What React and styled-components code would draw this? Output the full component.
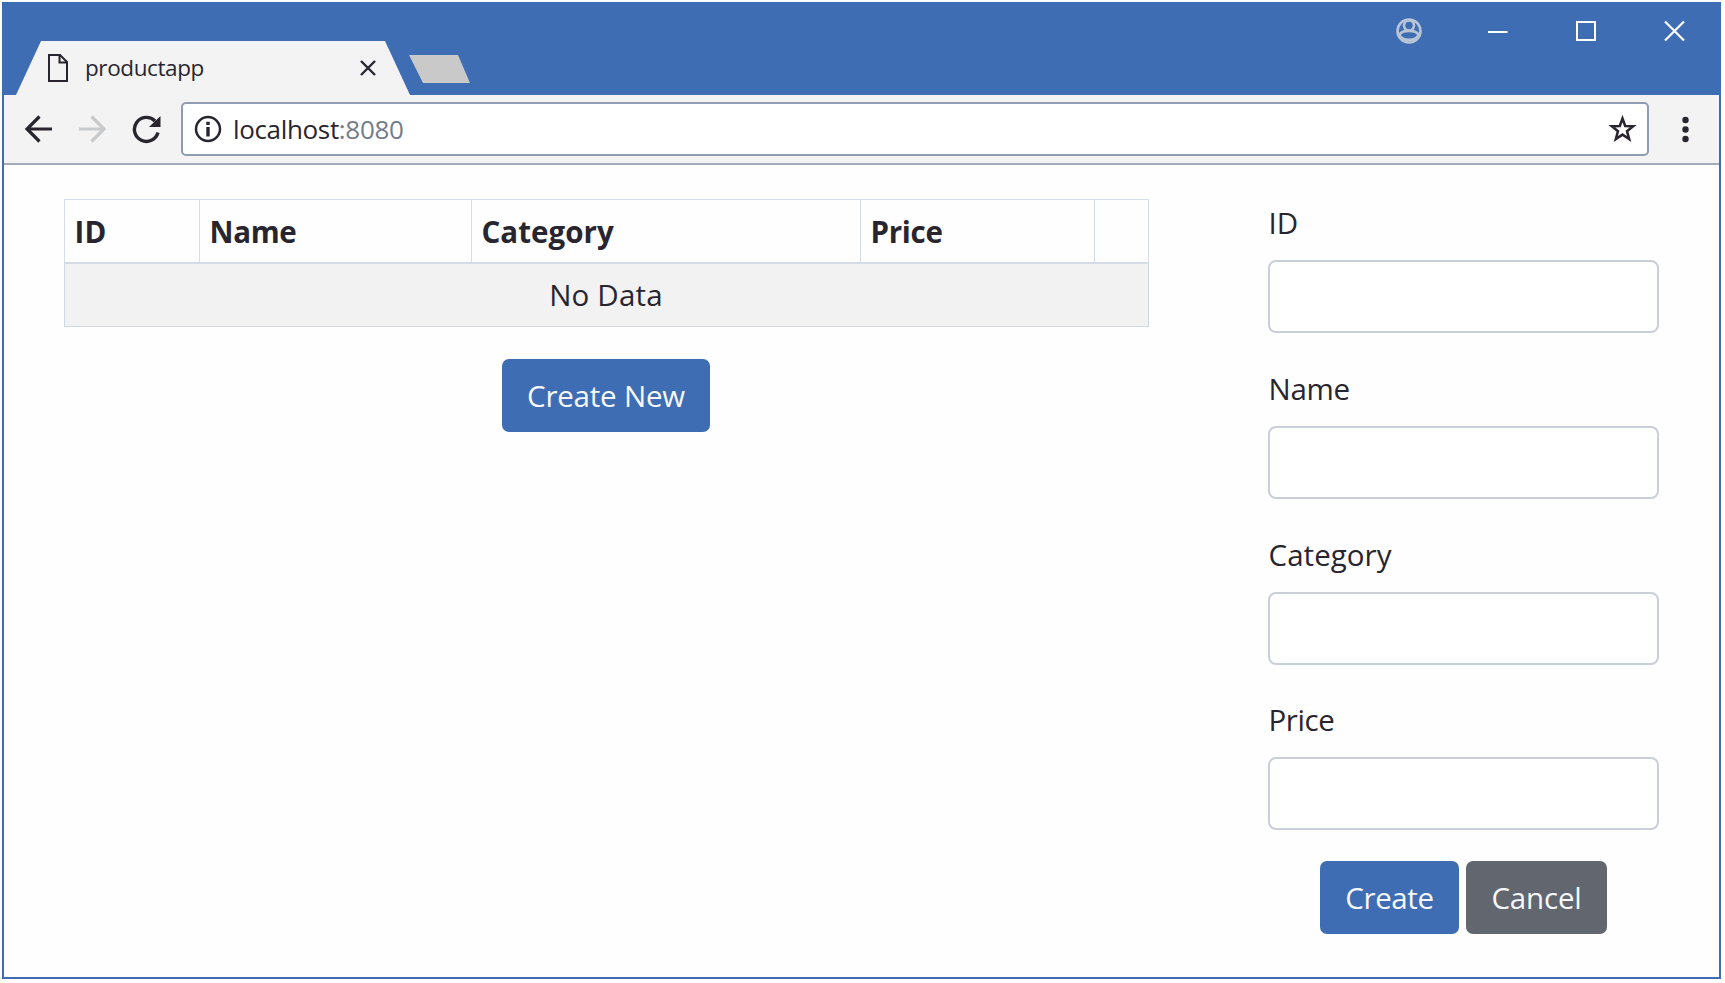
import React from "react";
import styled, { createGlobalStyle } from "styled-components";

const BLUE = "#3f6db3";
const INK = "#29252f";

const GlobalStyle = createGlobalStyle`
  * { box-sizing: border-box; }
  body {
    margin: 0;
    background: #fff;
    color: ${INK};
    font-family: "Open Sans", "Noto Sans", sans-serif;
    font-size: 29.5px;
    line-height: 40px;
  }
`;

const Page = styled.div`
  width: 1725px;
  height: 983px;
  padding: 2px 4px 4px 2px;
  overflow: hidden;
`;

const Window = styled.div`
  display: flex;
  flex-direction: column;
  height: 100%;
  border: 2px solid ${BLUE};
  background: #fefefe;
`;

const TitleBar = styled.header`
  display: flex;
  justify-content: space-between;
  height: 91px;
  flex: none;
  background: ${BLUE};
`;

const Tabs = styled.div`
  display: flex;
  align-items: flex-end;
  padding-left: 12px;
`;

const Tab = styled.div`
  display: flex;
  align-items: center;
  width: 394px;
  height: 54px;
  padding: 0 34px 0 32px;
  background: #f3f3f3;
  clip-path: polygon(0 100%, 25px 0, 369px 0, 100% 100%);
`;

const TabTitle = styled.span`
  flex: 1;
  margin-left: 17px;
  padding-bottom: 1px;
  font-size: 22.5px;
  line-height: 30px;
  letter-spacing: ${(p) => p.$spacing}px;
`;

const NewTab = styled.div`
  width: 61px;
  height: 28px;
  margin: 0 0 12px -1px;
  background: #c9c9c9;
  clip-path: polygon(0 0, 49px 0, 100% 100%, 14px 100%);
`;

const WindowControls = styled.div`
  display: flex;
  align-items: flex-start;
  gap: 60px;
  padding: 12px 31px 0 0;
`;

const Toolbar = styled.div`
  display: flex;
  align-items: center;
  height: 70px;
  flex: none;
  padding: 0 26px 0 19px;
  border-bottom: 2px solid #a3abb8;
  background: #f3f3f3;
`;

const NavIcons = styled.div`
  display: flex;
  gap: 24px;
  width: 158px;
`;

const AddressBar = styled.div`
  display: flex;
  align-items: center;
  width: 1469px;
  height: 54px;
  margin-right: 28px;
  padding: 0 10px 0 11px;
  border: 2px solid #909cb2;
  border-radius: 5px;
  background: #fff;
`;

const Url = styled.span`
  flex: 1;
  margin-left: 11px;
  font-size: 26px;
  line-height: 36px;
  letter-spacing: ${(p) => p.$spacing}px;
`;

const Port = styled.span`
  color: #747c89;
`;

const Content = styled.main`
  display: flex;
  padding: 34px 60px 0 60px;
`;

const ListPane = styled.section`
  display: flex;
  flex-direction: column;
  align-items: center;
  gap: 32px;
  width: 1084px;
`;

const Table = styled.table`
  width: 1084px;
  border-collapse: collapse;
  table-layout: fixed;
`;

const Col = styled.col`
  width: ${(p) => p.$w}px;
`;

const HeadCell = styled.th`
  height: 63px;
  padding: 2px 0 0 10px;
  border: 1px solid #d5dce7;
  border-bottom-width: 2px;
  text-align: left;
  font-weight: 700;
  letter-spacing: ${(p) => p.$spacing}px;
`;

const EmptyCell = styled.td`
  height: 64px;
  padding: 1px 0 0;
  border: 1px solid #d0d8e4;
  background: #f2f2f2;
  text-align: center;
  letter-spacing: ${(p) => p.$spacing}px;
`;

const Button = styled.button`
  width: ${(p) => p.$w}px;
  height: 73px;
  padding: 1px 0 0;
  border: 0;
  border-radius: 7px;
  background: ${(p) => (p.$secondary ? "#61666f" : BLUE)};
  color: #f6f7f9;
  font: inherit;
  letter-spacing: ${(p) => p.$spacing}px;
`;

const Form = styled.form`
  width: 391px;
  margin-left: 120px;
  padding-top: 4px;
`;

const Field = styled.label`
  display: block;
  height: 165.8px;
`;

const FieldLabel = styled.span`
  display: block;
  height: 57px;
  padding-left: 0.5px;
  letter-spacing: ${(p) => p.$spacing}px;
`;

const Input = styled.input`
  display: block;
  width: 100%;
  height: 73px;
  border: 2px solid #c9ced7;
  border-radius: 8px;
  background: #fff;
  font: inherit;
`;

const Actions = styled.div`
  display: flex;
  justify-content: center;
  gap: 7px;
  margin-top: -5px;
`;

const Icon = styled.svg`
  display: block;
  flex: none;
  fill: none;
  stroke: ${(p) => p.$color || INK};
  stroke-width: ${(p) => p.$stroke || 3};
`;

const fields = [
  ["ID", 0],
  ["Name", -0.3],
  ["Category", 0.05],
  ["Price", -0.4],
];

export default function App() {
  return (
    <Page>
      <GlobalStyle />
      <Window>
        <TitleBar>
          <Tabs>
            <Tab>
              <Icon width="20" height="28" viewBox="0 0 20 28" $stroke={2}>
                <path d="M1 1H12L19 8V27H1Z M11.5 1V8.5H19" />
              </Icon>
              <TabTitle $spacing={-0.4}>productapp</TabTitle>
              <Icon width="16" height="16" viewBox="0 0 16 16" $stroke={2.4}>
                <path d="M1 1L15 15M15 1L1 15" />
              </Icon>
            </Tab>
            <NewTab />
          </Tabs>
          <WindowControls>
            <Icon width="30" height="30" viewBox="0 0 30 30" $color="#b9c4d6" $stroke={2.6}>
              <circle cx="15" cy="15" r="11.5" />
              <circle cx="15" cy="9.5" r="5" />
              <path d="M5.500 19C7.500 13.500 22.500 13.500 24.500 19C22 25.500 8 25.500 5.500 19Z" />
            </Icon>
            <Icon width="28" height="30" viewBox="0 0 28 30" $color="#fff" $stroke={2}>
              <path d="M4 16H23.500" />
            </Icon>
            <Icon width="28" height="30" viewBox="0 0 28 30" $color="#fff" $stroke={2}>
              <rect x="5" y="6" width="18" height="18" />
            </Icon>
            <Icon width="28" height="30" viewBox="0 0 28 30" $color="#fff" $stroke={2.2}>
              <path d="M5 5.500L24 24.500M24 5.500L5 24.500" />
            </Icon>
          </WindowControls>
        </TitleBar>
        <Toolbar>
          <NavIcons>
            <Icon width="30" height="30" viewBox="0 0 30 30" $stroke={3.2}>
              <path d="M29 15H4M16.500 2.500L4 15L16.500 27.500" />
            </Icon>
            <Icon width="30" height="30" viewBox="0 0 30 30" $stroke={3.2} $color="#c9cacc">
              <path d="M2 15H27M14.500 2.500L27 15L14.500 27.500" />
            </Icon>
            <Icon width="30" height="30" viewBox="0 0 30 30" $stroke={3.4}>
              <path d="M27 18.500A12 12 0 1 1 24 7" />
              <path d="M29.500 2V13H18Z" fill={INK} stroke="none" />
            </Icon>
          </NavIcons>
          <AddressBar>
            <Icon width="28" height="28" viewBox="0 0 28 28" $stroke={2.5}>
              <circle cx="14" cy="14" r="12" />
              <path d="M14 12V21.500M14 6.800V10" strokeWidth="3.4" />
            </Icon>
            <Url $spacing={-0.33}>
              localhost<Port>:8080</Port>
            </Url>
            <Icon width="30" height="30" viewBox="0 0 30 30" $stroke={2.5}>
              <path d="M15.500 4.500L18.200 12L26.200 12.200L20 17.200L22.200 25L15.500 20.600L8.800 25L11 17.200L4.800 12.200L12.800 12Z" />
            </Icon>
          </AddressBar>
          <Icon width="16" height="30" viewBox="0 0 16 30">
            <g fill={INK} stroke="none">
              <circle cx="8.500" cy="6" r="3.200" />
              <circle cx="8.500" cy="15.500" r="3.200" />
              <circle cx="8.500" cy="25" r="3.200" />
            </g>
          </Icon>
        </Toolbar>
        <Content>
          <ListPane>
            <Table>
              <colgroup>
                <Col $w={135} />
                <Col $w={272} />
                <Col $w={389} />
                <Col $w={234} />
                <Col $w={54} />
              </colgroup>
              <thead>
                <tr>
                  <HeadCell $spacing={0.2}>ID</HeadCell>
                  <HeadCell $spacing={-0.3}>Name</HeadCell>
                  <HeadCell $spacing={0.05}>Category</HeadCell>
                  <HeadCell $spacing={-0.3}>Price</HeadCell>
                  <HeadCell />
                </tr>
              </thead>
              <tbody>
                <tr>
                  <EmptyCell colSpan={5} $spacing={0.2}>No Data</EmptyCell>
                </tr>
              </tbody>
            </Table>
            <Button type="button" $w={208} $spacing={-0.2}>Create New</Button>
          </ListPane>
          <Form>
            {fields.map(([label, spacing]) => (
              <Field key={label}>
                <FieldLabel $spacing={spacing}>{label}</FieldLabel>
                <Input />
              </Field>
            ))}
            <Actions>
              <Button type="button" $w={139} $spacing={-0.4}>Create</Button>
              <Button type="button" $w={141} $spacing={-0.2} $secondary>Cancel</Button>
            </Actions>
          </Form>
        </Content>
      </Window>
    </Page>
  );
}
